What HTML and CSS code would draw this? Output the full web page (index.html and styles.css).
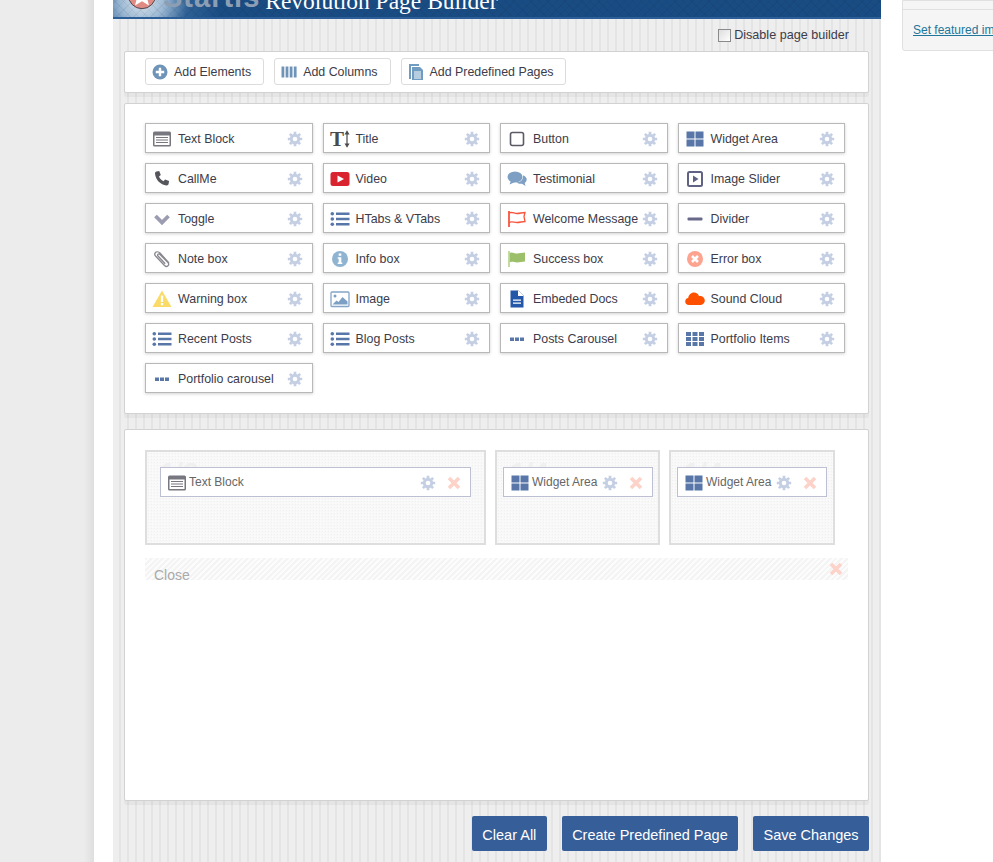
FILE: index.html
```html
<!DOCTYPE html>
<html>

<head>
    <meta charset="UTF-8">
    <link rel="stylesheet" href="styles.css">
</head>

<body>
    <svg class="defs" width="0" height="0">
        <symbol id="i-cog" viewBox="0 0 20 20">
            <g fill="none" stroke="#c5cfe3">
                <circle cx="10" cy="10" r="4.7" stroke-width="3.6" />
                <path stroke-width="3.4" d="M10 1v3M10 16v3M1 10h3M16 10h3M3.6 3.6l2.2 2.2M14.2 14.2l2.2 2.2M3.6 16.4l2.2-2.2M14.2 5.8l2.2-2.2" />
            </g>
        </symbol>
        <symbol id="i-x" viewBox="0 0 14 14">
            <path fill="none" stroke="#fdd2c8" stroke-width="3.6" d="M2 2l10 10M12 2L2 12" />
        </symbol>
        <symbol id="i-text" viewBox="0 0 20 20">
            <rect x="1" y="2.5" width="18" height="15" rx="1.5" fill="#77777f" />
            <rect x="2.5" y="6.5" width="15" height="9.5" fill="#fff" />
            <path stroke="#77777f" stroke-width="1.2" d="M4 8.5h12M4 11h12M4 13.5h12" />
        </symbol>
        <symbol id="i-title" viewBox="0 0 20 20">
            <text x="0" y="17" font-family="Liberation Serif" font-weight="bold" font-size="21" fill="#4a4a4a">T</text>
            <path stroke="#4a4a4a" stroke-width="1.2" fill="#4a4a4a" d="M17 4v12M15.5 5L17 2.5 18.5 5zM15.5 15l1.5 2.5 1.5-2.5z" />
        </symbol>
        <symbol id="i-button" viewBox="0 0 20 20">
            <rect x="3.5" y="3.5" width="13" height="13" rx="2" fill="none" stroke="#5b5b68" stroke-width="1.6" />
        </symbol>
        <symbol id="i-widget" viewBox="0 0 20 20">
            <path fill="#5877a8" d="M1.5 2.5h8v7h-8zM10.5 2.5h8v7h-8zM1.5 10.5h8v7h-8zM10.5 10.5h8v7h-8z" />
        </symbol>
        <symbol id="i-phone" viewBox="0 0 20 20">
            <path fill="#55555c" d="M4.5 2.500l2.700-.5 1.600 4-1.800 1.600c.8 2 2.400 3.700 4.400 4.600l1.700-1.700 4 1.600-.5 2.700c-.2 1-1.100 1.700-2.100 1.600C8.600 16 3.500 11 3 4.600c-.1-1 .5-1.900 1.500-2.100z" />
        </symbol>
        <symbol id="i-video" viewBox="0 0 20 20">
            <rect x="0.500" y="3" width="19" height="14" rx="2.500" fill="#d9232e" />
            <path fill="#fff" d="M7.500 6.500l6.500 3.500-6.500 3.500z" />
        </symbol>
        <symbol id="i-testi" viewBox="0 0 20 20">
            <ellipse cx="8" cy="8" rx="7.500" ry="5.500" fill="#7d9fc3" />
            <path fill="#7d9fc3" d="M4 11.500l-1.500 4 5.500-2.500z" />
            <path fill="#7d9fc3" d="M16.500 6.500c2 .8 3.200 2.300 3.200 4 0 1.500-.9 2.700-2 3.500l.8 3-3.500-2.300c-2 .3-4-.2-5.500-1.200 3.500-.1 7-2.500 6.500-7z" />
        </symbol>
        <symbol id="i-slider" viewBox="0 0 20 20">
            <rect x="3" y="3" width="14" height="14" rx="1.500" fill="#fff" stroke="#5f6282" stroke-width="2" />
            <path fill="#5f6282" d="M8 6.500l5.500 3.500L8 13.500z" />
        </symbol>
        <symbol id="i-chevron" viewBox="0 0 20 20">
            <path fill="none" stroke="#9b9bb2" stroke-width="3.800" d="M3.500 7l6.500 6.500L16.500 7" />
        </symbol>
        <symbol id="i-list" viewBox="0 0 20 20">
            <path fill="#5877a8" d="M6 3.500h13.500v2.600H6zM6 8.700h13.500v2.600H6zM6 13.900h13.500v2.600H6z" />
            <g fill="#5877a8">
                <circle cx="2.300" cy="4.800" r="1.800" />
                <circle cx="2.300" cy="10" r="1.800" />
                <circle cx="2.300" cy="15.200" r="1.800" />
            </g>
        </symbol>
        <symbol id="i-flag" viewBox="0 0 20 20">
            <path fill="none" stroke="#f8553e" stroke-width="1.300" d="M2 4c3-1.500 5 .5 8 .5 3 0 5-1 8-1l-1 4 1 5c-3 0-5 1-8 1s-5-1.500-8 0" />
            <path stroke="#f8553e" stroke-width="1.800" d="M2 2v16" />
        </symbol>
        <symbol id="i-divider" viewBox="0 0 20 20">
            <rect x="2.500" y="8.500" width="15" height="3" rx="1" fill="#68688a" />
        </symbol>
        <symbol id="i-clip" viewBox="0 0 20 20">
            <path fill="none" stroke="#88888f" stroke-width="1.300" d="M17 14L8 4c-1.500-1.500-3.500-1.500-4.500-.5S2.500 6 4 7.500l8.500 9c1 1 2.500 1.300 3.500.3s.7-2.500-.3-3.500L8 5.500c-.7-.7-1.500-.7-2-.2s-.5 1.300.2 2l7 7.500" />
        </symbol>
        <symbol id="i-info" viewBox="0 0 20 20">
            <circle cx="10" cy="10" r="8" fill="#8fb4d2" />
            <path fill="#fff" d="M8.700 4.500h2.600v2.300H8.700zM7.700 8.300h3.600v5.200h1v1.500H7.700v-1.500h1v-3.700h-1z" />
        </symbol>
        <symbol id="i-flag-ok" viewBox="0 0 20 20">
            <path fill="#9cc069" d="M2 4c3-1.500 5 .5 8 .5 3 0 5-1 8-1v9c-3 0-5 1-8 1s-5-1.500-8 0z" />
            <path stroke="#bcd89a" stroke-width="1.800" d="M2 2v16" />
        </symbol>
        <symbol id="i-error" viewBox="0 0 20 20">
            <circle cx="10" cy="10" r="8" fill="#fda38f" />
            <path stroke="#fff" stroke-width="2.600" d="M7 7l6 6M13 7l-6 6" />
        </symbol>
        <symbol id="i-warn" viewBox="0 0 20 20">
            <path fill="#fbdb68" d="M10 1.500l9.500 16.500H.5z" />
            <path fill="#fff" d="M8.900 6.500h2.200v6.500H8.900zM8.900 14h2.200v2.200H8.900z" />
        </symbol>
        <symbol id="i-image" viewBox="0 0 20 20">
            <rect x="1" y="3" width="18" height="14.500" rx="1" fill="#fff" stroke="#84a5c8" stroke-width="1.300" />
            <circle cx="5" cy="7" r="1.500" fill="#7d9fc3" />
            <path fill="#7d9fc3" d="M2.500 15.500l4-4 2 1.500 4-5 5 4.500v3z" />
        </symbol>
        <symbol id="i-doc" viewBox="0 0 20 20">
            <path fill="#2457a8" d="M3.500 1.500h8l5 5v12h-13z" />
            <path fill="#fff" d="M11 1.500v5.500h5.500v-.5l-5-5zM6 10.500h8v1.300H6zM6 13.500h8v1.300H6z" />
        </symbol>
        <symbol id="i-cloud" viewBox="0 0 20 20">
            <path fill="#ff5000" d="M4 16c-2.300 0-3.800-1.600-3.800-3.600 0-1.900 1.300-3.300 3-3.500C3.700 6 6 3.500 9 3.500c2.300 0 4.300 1.500 5 3.500 .4-.1.700-.1 1-.1 2.600 0 4.800 2 4.800 4.600S17.600 16 15 16z" />
        </symbol>
        <symbol id="i-dots" viewBox="0 0 20 20">
            <path fill="#5877a8" d="M3 8.500h4v3.400H3zM8 8.500h4v3.400H8zM13 8.500h4v3.400h-4z" />
        </symbol>
        <symbol id="i-grid" viewBox="0 0 20 20">
            <path fill="#5877a8" d="M1 3h5v4H1zM7.500 3h5v4h-5zM14 3h5v4h-5zM1 8h5v4H1zM7.500 8h5v4h-5zM14 8h5v4h-5zM1 13h5v4H1zM7.500 13h5v4h-5zM14 13h5v4h-5z" />
        </symbol>
        <symbol id="i-plus" viewBox="0 0 16 16">
            <circle cx="8" cy="8" r="7.500" fill="#7094b8" />
            <path stroke="#fff" stroke-width="2.400" d="M8 3.800v8.400M3.800 8h8.400" />
        </symbol>
        <symbol id="i-cols" viewBox="0 0 16 16">
            <path fill="#7094b8" d="M.5 2.500h2.800v11H.5zM4.600 2.500h2.800v11H4.600zM8.700 2.500h2.800v11H8.700zM12.800 2.500h2.800v11h-2.800z" />
        </symbol>
        <symbol id="i-pages" viewBox="0 0 16 16">
            <path fill="#6f9cc0" d="M1 0h10v2H3v13H1z" />
            <path fill="#6f9cc0" d="M4 3h8l3 3v10H4z" />
            <path stroke="#fff" d="M6 8h7M6 10h7M6 12h7M6 14h7" />
        </symbol>
    </svg>

    <div class="gutter"></div>

    <div class="wrap">
        <div class="builder">
            <div class="banner">
                <svg class="banner-logo" width="30" height="30" viewBox="0 0 34 34">
                    <circle cx="17" cy="17" r="15.500" fill="#e08a84" stroke="#3c3c46" />
                    <path fill="#fff" d="M17 5l3.600 8.500 9 .7-6.900 5.800 2.200 8.800-7.900-4.800-7.900 4.800 2.200-8.800-6.900-5.800 9-.7z" />
                </svg>
                <span class="banner-brand">Startis</span>
                <span class="banner-title">Revolution Page Builder</span>
            </div>

            <label class="disable-row">
                <span class="check"></span>
                Disable page builder
            </label>

            <div class="panel toolbar">
                <a class="tool"><svg width="16" height="16"><use href="#i-plus" /></svg>Add Elements</a>
                <a class="tool"><svg width="16" height="16"><use href="#i-cols" /></svg>Add Columns</a>
                <a class="tool"><svg width="16" height="16"><use href="#i-pages" /></svg>Add Predefined Pages</a>
            </div>

            <div class="panel elements">
                <div class="item"><svg class="ico"><use href="#i-text" /></svg><span>Text Block</span><svg class="cog"><use href="#i-cog" /></svg></div>
                <div class="item"><svg class="ico"><use href="#i-title" /></svg><span>Title</span><svg class="cog"><use href="#i-cog" /></svg></div>
                <div class="item"><svg class="ico"><use href="#i-button" /></svg><span>Button</span><svg class="cog"><use href="#i-cog" /></svg></div>
                <div class="item"><svg class="ico"><use href="#i-widget" /></svg><span>Widget Area</span><svg class="cog"><use href="#i-cog" /></svg></div>

                <div class="item"><svg class="ico"><use href="#i-phone" /></svg><span>CallMe</span><svg class="cog"><use href="#i-cog" /></svg></div>
                <div class="item"><svg class="ico"><use href="#i-video" /></svg><span>Video</span><svg class="cog"><use href="#i-cog" /></svg></div>
                <div class="item"><svg class="ico"><use href="#i-testi" /></svg><span>Testimonial</span><svg class="cog"><use href="#i-cog" /></svg></div>
                <div class="item"><svg class="ico"><use href="#i-slider" /></svg><span>Image Slider</span><svg class="cog"><use href="#i-cog" /></svg></div>

                <div class="item"><svg class="ico"><use href="#i-chevron" /></svg><span>Toggle</span><svg class="cog"><use href="#i-cog" /></svg></div>
                <div class="item"><svg class="ico"><use href="#i-list" /></svg><span>HTabs &amp; VTabs</span><svg class="cog"><use href="#i-cog" /></svg></div>
                <div class="item"><svg class="ico"><use href="#i-flag" /></svg><span>Welcome Message</span><svg class="cog"><use href="#i-cog" /></svg></div>
                <div class="item"><svg class="ico"><use href="#i-divider" /></svg><span>Divider</span><svg class="cog"><use href="#i-cog" /></svg></div>

                <div class="item"><svg class="ico"><use href="#i-clip" /></svg><span>Note box</span><svg class="cog"><use href="#i-cog" /></svg></div>
                <div class="item"><svg class="ico"><use href="#i-info" /></svg><span>Info box</span><svg class="cog"><use href="#i-cog" /></svg></div>
                <div class="item"><svg class="ico"><use href="#i-flag-ok" /></svg><span>Success box</span><svg class="cog"><use href="#i-cog" /></svg></div>
                <div class="item"><svg class="ico"><use href="#i-error" /></svg><span>Error box</span><svg class="cog"><use href="#i-cog" /></svg></div>

                <div class="item"><svg class="ico"><use href="#i-warn" /></svg><span>Warning box</span><svg class="cog"><use href="#i-cog" /></svg></div>
                <div class="item"><svg class="ico"><use href="#i-image" /></svg><span>Image</span><svg class="cog"><use href="#i-cog" /></svg></div>
                <div class="item"><svg class="ico"><use href="#i-doc" /></svg><span>Embeded Docs</span><svg class="cog"><use href="#i-cog" /></svg></div>
                <div class="item"><svg class="ico"><use href="#i-cloud" /></svg><span>Sound Cloud</span><svg class="cog"><use href="#i-cog" /></svg></div>

                <div class="item"><svg class="ico"><use href="#i-list" /></svg><span>Recent Posts</span><svg class="cog"><use href="#i-cog" /></svg></div>
                <div class="item"><svg class="ico"><use href="#i-list" /></svg><span>Blog Posts</span><svg class="cog"><use href="#i-cog" /></svg></div>
                <div class="item"><svg class="ico"><use href="#i-dots" /></svg><span>Posts Carousel</span><svg class="cog"><use href="#i-cog" /></svg></div>
                <div class="item"><svg class="ico"><use href="#i-grid" /></svg><span>Portfolio Items</span><svg class="cog"><use href="#i-cog" /></svg></div>

                <div class="item"><svg class="ico"><use href="#i-dots" /></svg><span>Portfolio carousel</span><svg class="cog"><use href="#i-cog" /></svg></div>
            </div>

            <div class="panel canvas">
                <div class="columns">
                    <div class="col">
                        <span class="col-size">1/2</span>
                        <div class="placed">
                            <svg class="ico"><use href="#i-text" /></svg>
                            <span>Text Block</span>
                            <svg class="cog"><use href="#i-cog" /></svg>
                            <svg class="del"><use href="#i-x" /></svg>
                        </div>
                    </div>
                    <div class="col col-small">
                        <span class="col-size">1/4</span>
                        <div class="placed">
                            <svg class="ico"><use href="#i-widget" /></svg>
                            <span>Widget Area</span>
                            <svg class="cog"><use href="#i-cog" /></svg>
                            <svg class="del"><use href="#i-x" /></svg>
                        </div>
                    </div>
                    <div class="col col-small">
                        <span class="col-size">1/4</span>
                        <div class="placed">
                            <svg class="ico"><use href="#i-widget" /></svg>
                            <span>Widget Area</span>
                            <svg class="cog"><use href="#i-cog" /></svg>
                            <svg class="del"><use href="#i-x" /></svg>
                        </div>
                    </div>
                </div>
                <div class="close-bar">
                    <span class="close-label">Close</span>
                    <svg class="del"><use href="#i-x" /></svg>
                </div>
            </div>

            <div class="actions">
                <a class="btn">Clear All</a>
                <a class="btn">Create Predefined Page</a>
                <a class="btn">Save Changes</a>
            </div>
        </div>

        <div class="sidebox">
            <div class="sidebox-head"></div>
            <div class="sidebox-body"><a class="sidebox-link">Set featured image</a></div>
        </div>
    </div>
</body>

</html>
```

FILE: styles.css
```css
html,
body {
    height: 862px;
    margin: 0;
    overflow: hidden;
}

body {
    display: flex;
    background-color: #fff;
    font-family: "Liberation Sans", Arial, sans-serif;
    font-size: 12px;
    color: #3c3c4a;
}

.defs {
    position: absolute;
}

.gutter {
    width: 94px;
    flex: none;
    background: linear-gradient(to right, #ececec 84px, #dedede);
}

.wrap {
    flex: none;
    display: flex;
    align-items: flex-start;
    gap: 21px;
    padding-left: 19px;
}

.builder {
    width: 768px;
    height: 862px;
    box-sizing: border-box;
    padding: 0 12px 0 11px;
    background: repeating-linear-gradient(to right, #eeeeee 0, #eeeeee 6px, #e4e4e4 6px, #e4e4e4 8px);
}

.banner {
    display: flex;
    align-items: flex-end;
    height: 19px;
    margin: 0 -12px 0 -11px;
    box-sizing: border-box;
    border-bottom: 2px solid #2c5f98;
    overflow: hidden;
    background:
        repeating-linear-gradient(45deg, rgba(0, 0, 0, .05) 0, rgba(0, 0, 0, .05) 1px, transparent 1px, transparent 6px),
        repeating-linear-gradient(-45deg, rgba(0, 0, 0, .05) 0, rgba(0, 0, 0, .05) 1px, transparent 1px, transparent 6px),
        radial-gradient(circle at 29px 0, #dfe8f0 0, #9cb9d4 22px, #2f6196 46px, #1a4c84 80px);
}

.banner-logo {
    flex: none;
    margin: 0 0 7px 14px;
}

.banner-brand {
    margin-left: 6px;
    font-size: 29px;
    line-height: 34px;
    font-weight: bold;
    letter-spacing: 1px;
    color: #8c9eb3;
    position: relative;
    top: -3px;
}

.banner-title {
    margin-left: 5px;
    font-family: "Liberation Serif", serif;
    font-size: 23.500px;
    line-height: 22px;
    color: #fff;
    position: relative;
    top: -5px;
}

.disable-row {
    display: flex;
    align-items: center;
    justify-content: flex-end;
    gap: 3px;
    height: 32px;
    padding-right: 20px;
    font-size: 12.600px;
}

.check {
    width: 11px;
    height: 11px;
    border: 1px solid #8a8a8a;
    background: linear-gradient(135deg, #ddd, #fff);
}

.panel {
    box-sizing: border-box;
    border: 1px solid #d2d2d2;
    border-radius: 2px;
    background: #fff;
    box-shadow: 0 4px 0 rgba(0, 0, 0, .035);
}

.toolbar {
    display: flex;
    gap: 10px;
    height: 42px;
    padding: 6px 20px;
    margin-bottom: 10px;
}

.tool {
    display: flex;
    align-items: center;
    gap: 6px;
    height: 27px;
    box-sizing: border-box;
    padding: 0 12px 0 6px;
    border: 1px solid #dcdcdc;
    border-radius: 3px;
    font-size: 12.400px;
}

.tool:last-child {
    padding-right: 11px;
}

.elements {
    display: grid;
    grid-template-columns: repeat(4, 1fr);
    grid-auto-rows: 30px;
    gap: 10px;
    height: 311px;
    padding: 19px 23px 0 20px;
    margin-bottom: 15px;
}

.item {
    display: flex;
    align-items: center;
    box-sizing: border-box;
    padding: 2px 9px 0 5px;
    border: 1px solid #b8b8b8;
    background: #fff;
    box-shadow: 0 1px 3px rgba(0, 0, 0, .18);
    font-size: 12.400px;
}

.item .ico {
    width: 20px;
    height: 20px;
    flex: none;
    margin: 0 6px 0 1px;
}

.item span {
    flex: 1;
    white-space: nowrap;
}

.cog {
    width: 16px;
    height: 16px;
    flex: none;
}

.canvas {
    height: 372px;
    padding: 20px 20px 0;
}

.columns {
    display: grid;
    grid-template-columns: 341px 165px 166px;
    gap: 9px;
}

.col {
    position: relative;
    box-sizing: border-box;
    height: 95px;
    padding: 15px 13px 0;
    border: 2px solid #dedede;
    background-color: #f8f8f8;
    background-image: radial-gradient(#f0f0f0 1px, transparent 1px), radial-gradient(#fdfdfd 1px, transparent 1px);
    background-size: 3px 3px;
    background-position: 0 0, 1px 2px;
}

.col-small {
    padding: 15px 5px 0 6px;
}

.col-small:last-child {
    padding-right: 6px;
}

.col-size {
    position: absolute;
    top: 5px;
    left: 13px;
    font-size: 28px;
    font-weight: bold;
    color: #f0f0f0;
}

.placed {
    position: relative;
    display: flex;
    align-items: center;
    height: 30px;
    box-sizing: border-box;
    padding: 2px 8px 0 6px;
    border: 1px solid #bcc0d2;
    background: #fff;
    color: #666;
}

.placed .ico {
    width: 20px;
    height: 20px;
    flex: none;
    margin-right: 2px;
}

.placed span {
    flex: 1;
    white-space: nowrap;
    margin-top: -3px;
}

.placed .del {
    margin-left: 11px;
    margin-right: 1px;
}

.del {
    width: 14px;
    height: 14px;
    flex: none;
}

.close-bar {
    display: flex;
    justify-content: space-between;
    align-items: center;
    height: 22px;
    margin-top: 13px;
    padding: 0 5px 0 9px;
    background: repeating-linear-gradient(135deg, #f4f4f4 0, #f4f4f4 2px, #fcfcfc 2px, #fcfcfc 4px);
}

.close-label {
    font-size: 14px;
    color: #aaa;
    margin-top: 12px;
}

.actions {
    display: flex;
    justify-content: flex-end;
    gap: 15px;
    margin-top: 15px;
}

.btn {
    display: flex;
    align-items: center;
    height: 35px;
    box-sizing: border-box;
    padding: 2px 10.400px 0;
    border-radius: 2px;
    background: #365e98;
    color: #fff;
    font-size: 14.500px;
}

.sidebox {
    width: 200px;
    box-sizing: border-box;
    border: 1px solid #e0e0e0;
    border-radius: 0 0 3px 3px;
    background: #f5f5f5;
}

.sidebox-head {
    height: 8px;
    border-bottom: 1px solid #e0e0e0;
}

.sidebox-body {
    height: 40px;
    box-sizing: border-box;
    padding: 13px 10px 0;
}

.sidebox-link {
    color: #21759b;
    text-decoration: underline;
    white-space: nowrap;
}
```
